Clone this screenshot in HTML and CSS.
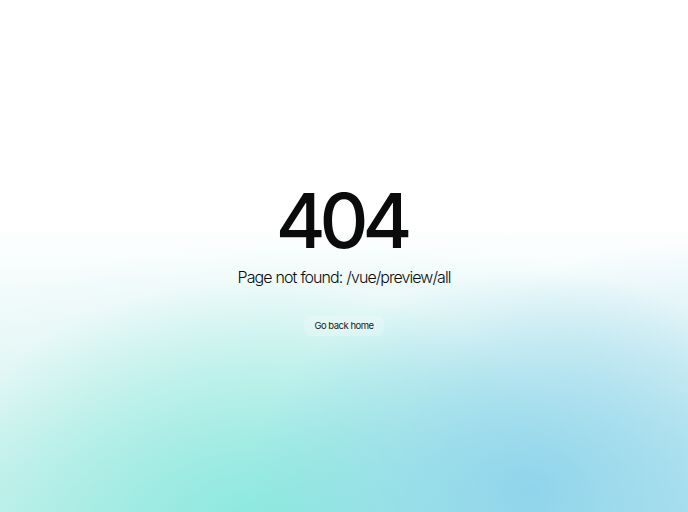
FILE: index.html
```html
<!DOCTYPE html>
<html lang="en">
<head>
<meta charset="utf-8">
<title>404</title>
<link rel="stylesheet" href="styles.css">
</head>
<body>
<main class="page">
  <h1 class="code">404</h1>
  <p class="message">Page not found: /vue/preview/all</p>
  <a class="home" href="#">Go back home</a>
</main>
</body>
</html>
```
FILE: styles.css
```css
html, body {
  margin: 0;
  height: 100%;
}
body {
  font-family: Inter, "Noto Sans", sans-serif;
  color: #0b0b0b;
  background:
    radial-gradient(ellipse 280px 220px at 530px 490px, rgba(140, 210, 236, 0.9), rgba(140, 210, 236, 0) 100%),
    radial-gradient(ellipse 340px 250px at 260px 530px, rgba(138, 232, 222, 1), rgba(138, 232, 222, 0) 100%),
    radial-gradient(ellipse 660px 330px at 330px 570px, rgba(175, 236, 230, 0.6), rgba(175, 236, 230, 0) 100%),
    radial-gradient(ellipse 320px 300px at 690px 540px, rgba(175, 220, 242, 0.8), rgba(175, 220, 242, 0) 100%),
    linear-gradient(180deg, #ffffff 0px, #ffffff 220px, #f3fbfb 290px, #e8f8f6 400px, #d2f3ee 512px);
  overflow: hidden;
}
.page {
  height: 512px;
  display: flex;
  flex-direction: column;
  align-items: center;
  box-sizing: border-box;
  padding-top: 172px;
}
.code {
  margin: 0;
  font-size: 76px;
  font-weight: 500;
  line-height: 96px;
  letter-spacing: -0.08em;
  text-indent: -0.08em;
}
.message {
  margin: 0;
  font-size: 16px;
  font-weight: 300;
  line-height: 26px;
  margin-top: -4px;
  letter-spacing: -0.95px;
  word-spacing: 0.5px;
}
.home {
  margin-top: 26px;
  font-size: 9.5px;
  color: #1a1a1a;
  text-decoration: none;
  padding: 4px 10px;
  border-radius: 6px;
  background: rgba(255, 255, 255, 0.22);
  line-height: 12px;
  letter-spacing: -0.5px;
}
```
